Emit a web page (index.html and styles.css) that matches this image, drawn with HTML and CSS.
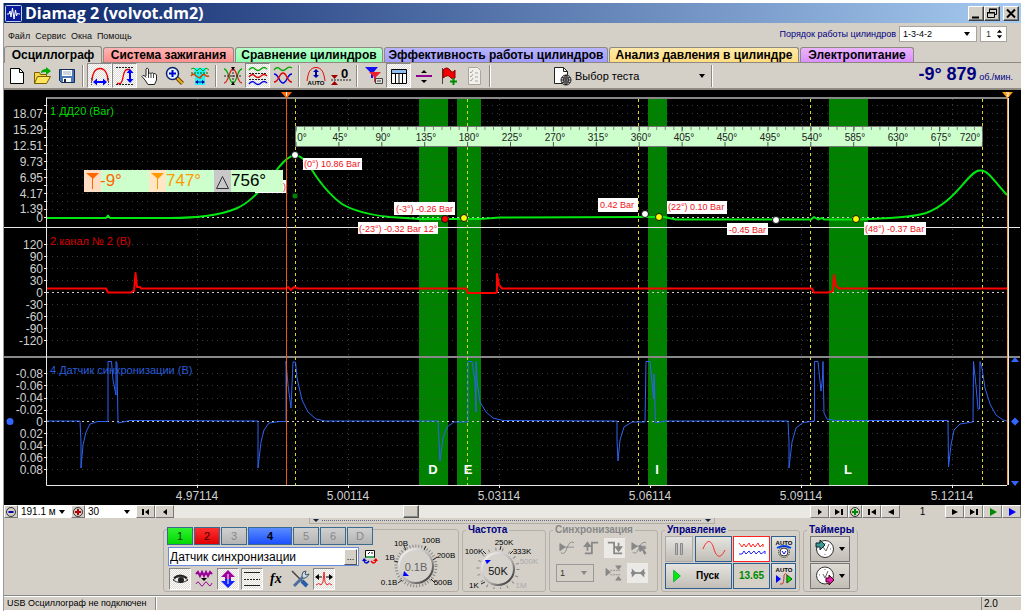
FILE: index.html
```html
<!DOCTYPE html>
<html lang="ru">
<head>
<meta charset="utf-8">
<title>Diamag 2 (volvot.dm2)</title>
<link rel="stylesheet" href="styles.css">
</head>
<body>
<div class="window">
<header class="titlebar">
  <svg class="app-logo" viewBox="0 0 17 17"><rect x=".5" y=".5" width="16" height="16" rx="1" fill="#0a1a9c" stroke="#c4d0f4"/><path d="M2 9h2l1-3 1 6 1.500-9 1.500 11L10.500 5l1 6 1-3 1 1H15" fill="none" stroke="#fff"/></svg>
  <h1>Diamag 2 (volvot.dm2)</h1>
  <div class="win-buttons">
    <button aria-label="Свернуть"><svg viewBox="0 0 16 15"><path d="M4 11.500h7" stroke="#000" stroke-width="2"/></svg></button>
    <button aria-label="Восстановить"><svg viewBox="0 0 16 15" fill="none" stroke="#000"><path d="M5.500 6V3.500h7v5H11M5 3h8M3.500 6.500h7v5h-7zM3 7h8"/></svg></button>
    <button class="close" aria-label="Закрыть"><svg viewBox="0 0 16 15"><path d="M4 3.500l8 8M12 3.500l-8 8" stroke="#000" stroke-width="2"/></svg></button>
  </div>
</header>

<div class="menubar">
  <nav class="menu"><a href="#">Файл</a><a href="#">Сервис</a><a href="#">Окна</a><a href="#">Помощь</a></nav>
  <div class="order">
    <label for="order">Порядок работы цилиндров</label>
    <span class="combo combo-order"><select id="order"><option>1-3-4-2</option></select></span>
    <span class="spin"><input aria-label="Номер цилиндра" value="1"><svg viewBox="0 0 8 12"><path d="M1 4.500L4 1l3 3.500zM1 7.500L4 11l3-3.500z"/></svg></span>
  </div>
</div>

<nav class="tabs">
  <button class="tab tab-scope">Осциллограф</button>
  <button class="tab tab-ignition">Система зажигания</button>
  <button class="tab tab-compare">Сравнение цилиндров</button>
  <button class="tab tab-efficiency">Эффективность работы цилиндров</button>
  <button class="tab tab-pressure">Анализ давления в цилиндре</button>
  <button class="tab tab-power">Электропитание</button>
</nav>

<div class="toolbar">
  <button class="tool" aria-label="Новый"><svg viewBox="0 0 20 20"><path d="M3.500 2.500h9l4 4v11h-13z" fill="#fff" stroke="#000"/><path d="M12.500 2.500v4h4" fill="none" stroke="#000"/></svg></button>
  <button class="tool" aria-label="Открыть"><svg viewBox="0 0 20 20"><path d="M2.500 17.500v-11h5l1 2h6v3" fill="#f5d84a" stroke="#7a5f00"/><path d="M2.500 17.500l3-7h13l-4 7z" fill="#ffe45e" stroke="#7a5f00"/><path d="M9 6q1-3 5-3V1l5 4-5 4V6q-3 0-5 1z" fill="#0a0"/></svg></button>
  <button class="tool" aria-label="Сохранить"><svg viewBox="0 0 20 20"><path d="M2.500 3.500h15v13h-13l-2-2z" fill="#4c78b8" stroke="#112a55"/><path d="M5 4h10v6H5zM6 12h8v4H6z" fill="#fff"/><path d="M7 13h2v3H7z" fill="#123"/><path d="M6 6h8M6 8h8" stroke="#9ab"/></svg></button>
  <i class="sep"></i>
  <button class="tool pressed" aria-label="Масштаб по горизонтали"><svg viewBox="0 0 20 20" fill="none"><path d="M2 15C2 8 5 2.500 10 2.500S18 8 18 15" stroke="#e00" stroke-width="1.300"/><path d="M1.500 12v7M18.500 12v7" stroke="#555" stroke-dasharray="2 1"/><path d="M3 16l4-3.500V15h6v-2.500l4 3.500-4 3.500V17H7v2.500z" fill="#00f"/></svg></button>
  <button class="tool pressed" aria-label="Масштаб по вертикали"><svg viewBox="0 0 20 20" fill="none"><path d="M2 17.500h3C9 17 7 4 12 3.500h3" stroke="#e00" stroke-width="1.300"/><path d="M1 1.500h18M1 18.500h18" stroke="#222" stroke-dasharray="2 1"/><path d="M15 3l3.500 4H16v6h2.500L15 17l-3.500-4H14V7h-2.500z" fill="#00f"/></svg></button>
  <button class="tool" aria-label="Рука"><svg viewBox="0 0 20 20"><path d="M6 10V3q1-2 2.500 0v5q1-2 2.500-.500 1-1.500 2.500 0Q15.500 7 16.500 9v5l-2 4.500H8L5 14l-3-3.500q.500-2 3-.5l1 1.500" fill="#fff" stroke="#222"/><path d="M8.500 8v4M11 8v4M13.500 8v4" stroke="#444"/></svg></button>
  <button class="tool" aria-label="Лупа"><svg viewBox="0 0 20 20"><path d="M11.500 11.500l6 6" stroke="#6a4a00" stroke-width="4"/><path d="M11.500 11.500l6 6" stroke="#f0b020" stroke-width="2"/><circle cx="7.500" cy="7.500" r="6" fill="#dff4ff" stroke="#10206a" stroke-width="1.500"/><path d="M7.500 4v7M4 7.500h7" stroke="#00c" stroke-width="2"/></svg></button>
  <button class="tool" aria-label="Фрагмент"><svg viewBox="0 0 20 20" fill="none"><path d="M4 2h12l-1 9v8H5v-8z" fill="#20f0f8"/><path d="M1 3l3-1 3 3 3-3 3 3 3-3 3 2" stroke="#0a0"/><path d="M1 10q2-3 4-1t5 3q3-5 5-3t4 1" stroke="#c40" stroke-width="1.500"/><path d="M1 7h18" stroke="#060" stroke-dasharray="2 1"/><path d="M5 16l3-2v1.500h4V14l3 2-3 2v-1.500H8V18z" fill="#00a"/></svg></button>
  <i class="sep"></i>
  <button class="tool" aria-label="Пересечение"><svg viewBox="0 0 20 20" fill="none"><path d="M1 3c5 0 5 14 9 14s4-14 9-14" stroke="#0a0" stroke-width="1.300"/><path d="M1 17c5 0 5-14 9-14s4 14 9 14" stroke="#d22" stroke-width="1.300"/><path d="M1 10h18M10 3v15" stroke="#222" stroke-dasharray="2 1"/><path d="M8 1h4l-2 3zM8 19h4l-2-3z" fill="#000"/></svg></button>
  <button class="tool pressed" aria-label="Раздельно"><svg viewBox="0 0 20 20" fill="none"><path d="M1 4q3-4 6-1t6 0 6 0" stroke="#0a0" stroke-width="1.300"/><path d="M1 11q3-4 6-1t6 0 6 0" stroke="#d00" stroke-width="1.300"/><path d="M1 18q3-4 6-1t6 0 6 0" stroke="#00d" stroke-width="1.300"/><path d="M1 7.500h18M1 13.500h18" stroke="#222" stroke-dasharray="2 1"/></svg></button>
  <button class="tool" aria-label="Совместно"><svg viewBox="0 0 20 20" fill="none"><path d="M1 4q3-4 6-1t6 0 6-1" stroke="#0a0" stroke-width="1.300"/><path d="M1 8c5 0 5 9 9 9s4-9 9-9" stroke="#00d" stroke-width="1.300"/><path d="M1 16c5 0 5-9 9-9s4 9 9 9" stroke="#d00" stroke-width="1.300"/></svg></button>
  <i class="sep"></i>
  <button class="tool" aria-label="Автомасштаб"><svg viewBox="0 0 20 20" fill="none"><path d="M1 15C2 7 4 1.500 10 1.500S18 7 19 15" stroke="#e00"/><path d="M10 3l3 3h-2v3h2l-3 3-3-3h2V6H7z" fill="#00a"/><text x="10" y="19" class="auto-text">AUTO</text></svg></button>
  <button class="tool" aria-label="Обнулить"><svg viewBox="0 0 20 20"><path d="M0 9h7L3.500 13zM0 19h7l-3.500-4z" fill="#a00000"/><path d="M0 14h20" stroke="#222" stroke-dasharray="2 1"/><text x="10" y="12" class="zero-text">0</text></svg></button>
  <i class="sep"></i>
  <button class="tool" aria-label="Фильтр"><svg viewBox="0 0 20 20"><path d="M1 1h13L9 7v5H7V7z" fill="#1010f0"/><path d="M5 6h12l-5 5v5h-2v-5z" fill="#e82030"/><path d="M11.500 12.500h7v5h-7z" fill="#ddd" stroke="#444"/><path d="M13 15h4" stroke="#444"/></svg></button>
  <button class="tool pressed" aria-label="Таблица"><svg viewBox="0 0 20 20"><path d="M2.500 3.500h15v14h-15z" fill="#fff" stroke="#000"/><path d="M3 4h14v3H3z" fill="#8bbcf0"/><path d="M3 7.500h14M6.500 8v9M10 8v9M13.500 8v9" stroke="#000"/></svg></button>
  <button class="tool" aria-label="Разделить"><svg viewBox="0 0 20 20"><path d="M2 10h16" stroke="#900090" stroke-width="2"/><path d="M7 7l3-3 3 3zM7 14l3 3 3-3z"/></svg></button>
  <button class="tool" aria-label="Добавить флаг"><svg viewBox="0 0 20 20"><path d="M3.500 2v16" stroke="#444"/><path d="M4 4q4-4 7 0t5 0v8q-3 2-5-1t-7 1z" fill="#f00000" stroke="#800"/><path d="M14.500 12v7M11 15.500h7" stroke="#008a00" stroke-width="2"/></svg></button>
  <button class="tool" aria-label="Список"><svg viewBox="0 0 20 20"><path d="M4.500 1.500h9l3 3v14h-12z" fill="#f2f0ea" stroke="#aaa69e"/><path d="M6 6l1 1 2-3M6 10l1 1 2-3M6 14l1 1 2-3M11 7h3M11 11h3M11 15h3" fill="none" stroke="#aaa69e"/></svg></button>
  <i class="sep"></i>
  <button class="test-select"><svg viewBox="0 0 20 20"><path d="M2.500 1.500h9l4 4v12h-13z" fill="#fff" stroke="#222"/><path d="M11.500 1.500v4h4" fill="none" stroke="#222"/><circle cx="14" cy="14" r="5" fill="#ddd" stroke="#222"/><path d="M9 14h10M14 9v10M10 11.500q4 1.500 8 0M10 16.500q4-1.500 8 0M14 9q-5 5 0 10 5-5 0-10" stroke="#222" fill="none"/></svg><span>Выбор теста</span><svg class="drop" viewBox="0 0 6 4"><path d="M0 0h6L3 4z"/></svg></button>
  <i class="sep"></i>
  <output class="rpm"><b>-9° 879</b> об./мин.</output>
</div>

<main class="scope">
<svg class="chart" viewBox="4 90 1017 415">
  <g class="bands"><path d="M419 99h29v386h-29zM457 99h24v386h-24zM648 99h19v386h-19zM829 99h39v386h-39z"/></g>
  <g class="grid">
    <path d="M47 105.500H1007M47 113.500H1007M47 121.500H1007M47 129.500H1007M47 137.500H1007M47 145.500H1007M47 153.500H1007M47 161.500H1007M47 169.500H1007M47 177.500H1007M47 185.500H1007M47 193.500H1007M47 201.500H1007M47 209.500H1007"/>
    <path d="M47 244.500H1007M47 256.500H1007M47 268.500H1007M47 280.500H1007M47 304.500H1007M47 316.500H1007M47 328.500H1007M47 340.500H1007"/>
    <path d="M47 373.500H1007M47 385.500H1007M47 398.500H1007M47 410.500H1007M47 433.500H1007M47 445.500H1007M47 457.500H1007M47 469.500H1007"/>
    <path d="M197.500 99V485M348.500 99V485M499.500 99V485M650.500 99V485M801.500 99V485M952.500 99V485"/>
  </g>
  <path class="zero" d="M47 217.500H1007M47 292.500H1007M47 421.500H1007"/>
  <g class="axis">
    <path class="frame-soft" d="M46 98H1008M4 357H1020"/>
    <path d="M46.500 98V485.500H1007M4 227.500H1020M1008.500 98V485"/>
    <path d="M44 105.500h3M44 113.500h3M44 121.500h3M44 129.500h3M44 137.500h3M44 145.500h3M44 153.500h3M44 161.500h3M44 169.500h3M44 177.500h3M44 185.500h3M44 193.500h3M44 201.500h3M44 209.500h3M44 217.500h3M44 244.500h3M44 256.500h3M44 268.500h3M44 280.500h3M44 292.500h3M44 304.500h3M44 316.500h3M44 328.500h3M44 340.500h3M44 373.500h3M44 385.500h3M44 398.500h3M44 410.500h3M44 421.500h3M44 433.500h3M44 445.500h3M44 457.500h3M44 469.500h3"/>
    <path d="M197.500 486v2M348.500 486v2M499.500 486v2M650.500 486v2M801.500 486v2M952.500 486v2"/>
  </g>
  <g class="ylab">
    <text x="43" y="118">18.07</text><text x="43" y="134">15.29</text><text x="43" y="150">12.51</text><text x="43" y="166">9.73</text><text x="43" y="182">6.95</text><text x="43" y="198">4.17</text><text x="43" y="213">1.39</text><text x="43" y="222">0</text>
    <text x="43" y="249">120</text><text x="43" y="261">90</text><text x="43" y="273">60</text><text x="43" y="285">30</text><text x="43" y="297">0</text><text x="43" y="309">-30</text><text x="43" y="321">-60</text><text x="43" y="333">-90</text><text x="43" y="345">-120</text>
    <text x="43" y="378">-0.08</text><text x="43" y="390">-0.06</text><text x="43" y="402">-0.04</text><text x="43" y="414">-0.02</text><text x="43" y="426">0</text><text x="43" y="438">0.02</text><text x="43" y="450">0.04</text><text x="43" y="462">0.06</text><text x="43" y="474">0.08</text>
  </g>
  <g class="xlab">
    <text x="197" y="500">4.97114</text><text x="348" y="500">5.00114</text><text x="499" y="500">5.03114</text><text x="650" y="500">5.06114</text><text x="801" y="500">5.09114</text><text x="952" y="500">5.12114</text>
  </g>
  <g class="chan">
    <text x="50" y="115" fill="#00d800">1 ДД20 (Bar)</text>
    <text x="50" y="245" fill="#d80000">2 канал № 2 (В)</text>
    <text x="50" y="374" fill="#2a5cd8">4 Датчик синхронизации (В)</text>
  </g>
  <path class="cyl" d="M295.500 99V485M467.500 99V485M638.500 99V485M810.500 99V485M982.500 99V485"/>
  <path class="trace green" d="M47 218H106L108 215.500 110 218H170C195 218 220 215 235 209 248 204 258 193 268 181 278 169 285 157 295 155 306 157 310 168 318 179 326 190 335 199 342 204 352 210 370 215 390 217L420 219H480L500 217.500 640 217H664L676 219.500H811L814 217 818 219.500 822 218 824 219.500H860L890 218C905 217 920 215 926 213 945 206 956 192 965 182 972 174 976 170 980 170.500 988 169 996 184 1007 195"/>
  <path class="trace red" d="M47 288.500H106L108 292.500H131L133 291 134 291 135.500 273 137 287 140 287 141 288.500H286L288 287 291 290 294 287 298 288.500H466L468 293H495L497 292 497 274 499 285 502 288.500H812L814 292.500H828L833 291 834 275 836 286 839 288.500H1007"/>
  <path class="trace blue" d="M47 421H80L81 442V468L83 445 86 432 90 424 98 421.500H108V361.500H111.500L113 380 116 395V361.500L117 363 118 423 130 420.500H150L258 421 258 442V468L261 442 264 430 269 423 280 421.500H286V361L288 385 291 408 293 362H295.500L297 378 302 400 308 412 316 419 325 421H438L439 442 440 461 443 438 447 427 454 422H468V361.500H472L475 381 476 412 476 361.500 477 381 480 402 486 412 493 418 503 420.500 617 421V440L618 461 620 440 624 427 632 422H645L646 361.500H650L653 393 654 399V374L655.500 423 665 421H788L789 442V468L792 442 796 428 803 422.500 814.500 421V361.500H818L821 391 822.500 378 823 361.500 824 413 827 419 835 420.500H948L948.500 467 951 445 954 430 960 424 973 422 973.500 361.500 976 386 978 409H979.500L980 361.500 982 368 985 388 990 404 996 415 1003 420 1007 421"/>
  <g class="letters"><text x="433" y="474">D</text><text x="468" y="474">E</text><text x="657" y="474">I</text><text x="848" y="474">L</text></g>

  <g class="ruler">
    <path d="M295.500 126.500h687v20h-687z"/>
    <path class="minor" d="M295.500 128.500H982.500" pathLength="800" stroke-width="3" stroke-dasharray="1.200 8.800"/>
    <path class="ticks" d="M295.500 129H982.500M295.500 144.500H982.500" stroke-width="5" stroke-dasharray="1 41.900"/>
    <text x="302" y="141">0°</text><text x="340" y="141">45°</text><text x="383" y="141">90°</text><text x="426" y="141">135°</text><text x="469" y="141">180°</text><text x="512" y="141">225°</text><text x="555" y="141">270°</text><text x="598" y="141">315°</text><text x="641" y="141">360°</text><text x="684" y="141">405°</text><text x="727" y="141">450°</text><text x="770" y="141">495°</text><text x="812" y="141">540°</text><text x="855" y="141">585°</text><text x="898" y="141">630°</text><text x="941" y="141">675°</text><text x="970" y="141">720°</text>
  </g>
  <g class="notes">
    <path d="M303 158h59v12h-59zM394 202h61v13h-61zM358 222h80v12h-80zM598 198h40v14h-40zM667 201h60v13h-60zM727 223h41v12h-41zM864 222h62v13h-62zM255 180h32v13h-32z"/>
    <text x="304" y="167">(0°) 10.86 Bar</text><text x="396" y="212">(-3°) -0.26 Bar</text><text x="359" y="232">(-23°) -0.32 Bar 12°</text><text x="600" y="208">0.42 Bar</text><text x="668" y="210">(22°) 0.10 Bar</text><text x="729" y="233">-0.45 Bar</text><text x="865" y="232">(48°) -0.37 Bar</text><text x="283" y="190">)</text>
  </g>
  <g class="dots">
    <circle cx="295" cy="155" r="3.500" fill="#fff"/><circle cx="295" cy="196" r="3" fill="#008000"/><circle cx="445" cy="219" r="3.500" fill="#f00"/><circle cx="464" cy="218" r="3.500" fill="#ff0"/><circle cx="645" cy="214" r="3.500" fill="#fff"/><circle cx="659" cy="217" r="3.500" fill="#ff0"/><circle cx="776" cy="220" r="3.500" fill="#fff"/><circle cx="856" cy="219" r="3.500" fill="#ff0"/>
  </g>
  <path d="M286.500 93V485" stroke="#e85a10"/>
  <path d="M281 92h11l-5.500 6.500z" fill="#ff6a10"/><path d="M286.500 92v4" stroke="#fff"/>
  <path d="M1007.500 93V485" stroke="#f0a040"/>
  <path d="M1002 92h11l-5.500 6.500z" fill="#ff9a10"/><path d="M1006 93h3l-2 3h2" fill="none" stroke="#fff"/>
  <g class="cursors">
    <path d="M84 170h199v22H84z" fill="#cfc" stroke="none"/>
    <path d="M84 170h17v22H84z" fill="#ffdcc4"/><path d="M149 170h17v22h-17z" fill="#ffe6c4"/><path d="M214 170h17v22h-17z" fill="#c8c8c8"/>
    <path d="M86 173h13l-6 6z" fill="#f60"/><path d="M92.500 178v11" stroke="#f60"/>
    <path d="M151 173h13l-6 6z" fill="#f90"/><path d="M157.500 178v11" stroke="#f90"/>
    <path d="M216.500 188.500h12l-6-12z" fill="none" stroke="#333"/>
    <text x="100" y="186" fill="#f60">-9°</text><text x="166" y="186" fill="#f90">747°</text><text x="231" y="186" fill="#000">756°</text>
  </g>
  <g fill="#36f"><circle cx="10" cy="421.500" r="3.500"/><path d="M1011 421.500l4-4 4 4-4 4zM1011 362l4-5 4 5zM1011 481l4 5 4-5z"/></g>
</svg>
</main>

<div class="navrow">
  <button class="nav round" aria-label="Уменьшить"><svg viewBox="0 0 12 12"><circle cx="6" cy="6" r="4.500" fill="none" stroke="#333"/><path d="M3.500 6h5" stroke="#00a" stroke-width="2"/></svg></button>
  <span class="combo combo-time"><select aria-label="Развёртка"><option>191.1 м</option></select></span>
  <button class="nav round" aria-label="Увеличить"><svg viewBox="0 0 12 12"><circle cx="6" cy="6" r="4.500" fill="none" stroke="#333"/><path d="M3 6h6M6 3v6" stroke="#b00" stroke-width="2"/></svg></button>
  <span class="combo combo-count"><select aria-label="Число кадров"><option>30</option></select></span>
  <button class="nav" aria-label="В начало"><svg viewBox="0 0 12 12"><path d="M2 3h2v6H2zM9 3v6L5 6z"/></svg></button>
  <button class="nav" aria-label="Назад"><svg viewBox="0 0 12 12"><path d="M8 3v6L4 6z"/></svg></button>
  <input class="scroll" type="range" min="0" max="100" value="37" aria-label="Прокрутка">
  <button class="nav" aria-label="Вперёд"><svg viewBox="0 0 12 12"><path d="M4 3v6l4-3z"/></svg></button>
  <button class="nav" aria-label="В конец"><svg viewBox="0 0 12 12"><path d="M8 3h2v6H8zM2 3v6l5-3z"/></svg></button>
  <button class="nav round" aria-label="Добавить"><svg viewBox="0 0 12 12"><circle cx="6" cy="6" r="4.500" fill="none" stroke="#333"/><path d="M3 6h6M6 3v6" stroke="#080" stroke-width="2"/></svg></button>
  <button class="nav" aria-label="Первый"><svg viewBox="0 0 12 12"><path d="M2 3h2v6H2zM10 3v6L5 6z"/></svg></button>
  <button class="nav" aria-label="Предыдущий"><svg viewBox="0 0 12 12"><path d="M9 3v6L3 6z"/></svg></button>
  <output class="page">1</output>
  <button class="nav" aria-label="Следующий"><svg viewBox="0 0 12 12"><path d="M3 3v6l6-3z"/></svg></button>
  <button class="nav" aria-label="Последний"><svg viewBox="0 0 12 12"><path d="M8 3h2v6H8zM2 3v6l5-3z"/></svg></button>
  <button class="nav" aria-label="Воспроизвести"><svg viewBox="0 0 12 12"><path d="M3 2v8l7-4z" fill="#080"/></svg></button>
  <button class="nav" aria-label="Воспроизвести всё"><svg viewBox="0 0 12 12"><path d="M3 2v8l7-4z" fill="#00f"/></svg></button>
</div>
<div class="splitter"><i></i></div>

<section class="dock">
  <div class="group channel">
    <div class="channel-main">
      <div class="chan-row">
        <button class="ch ch-1">1</button><button class="ch ch-2">2</button><button class="ch">3</button><button class="ch ch-4">4</button><button class="ch">5</button><button class="ch">6</button><button class="ch">D</button>
      </div>
      <div class="name-row">
        <div class="name"><input aria-label="Название канала" value="Датчик синхронизации"><button aria-label="Выбрать">...</button></div>
        <svg class="probe" viewBox="0 0 16 16"><path d="M3.500 1.500h9v7h-9z" fill="#fff" stroke="#111"/><path d="M4 7h8v2H4z" fill="#4a6"/><path d="M6 5l2-2M9 4h2" stroke="#222"/><path d="M7 12q-3 4-5 0" fill="none" stroke="#00c" stroke-width="1.500"/><path d="M0 12l2-3 3 3z" fill="#00c"/><path d="M9 12q3 4 5 0" fill="none" stroke="#e00" stroke-width="1.500"/><path d="M16 12l-2-3-3 3z" fill="#e00"/></svg>
      </div>
      <div class="flag-row">
        <button class="flag pressed" aria-label="Показать"><svg viewBox="0 0 20 18"><path d="M3 10q7-7 15 0-8 5-15 0z" fill="#eee" stroke="#333"/><path d="M4 8q6-5 13 0" fill="none" stroke="#222" stroke-width="2"/><circle cx="11" cy="10" r="3" fill="#222"/></svg></button>
        <button class="flag" aria-label="Сигнал"><svg viewBox="0 0 20 18" fill="none" stroke="#909"><path d="M2 4l2-2 2 4 2-4 2 4 2-4 2 4 2-4 2 2" stroke-width="2"/><path d="M2 14q2-4 4 0t4 0 4 0 4-1"/><path d="M7 8h6l-3 3z" fill="#000" stroke="none"/></svg></button>
        <button class="flag pressed" aria-label="Сдвиг"><svg viewBox="0 0 20 18"><path d="M10 0l7 7h-4v2H7V7H3z" fill="#a000a0"/><path d="M10 18l7-7h-4V9H7v2H3z" fill="#1020ff"/><path d="M10 4v10" stroke="#fff"/></svg></button>
        <button class="flag pressed" aria-label="Уровни"><svg viewBox="0 0 20 18" stroke="#222"><path d="M2 2.500h16M2 15.500h16"/><path d="M2 9.500h16" stroke-dasharray="2 1"/></svg></button>
        <button class="flag" aria-label="Функция"><svg viewBox="0 0 20 18"><text x="4" y="13" class="fx">fx</text></svg></button>
        <button class="flag" aria-label="Настройки"><svg viewBox="0 0 20 18"><path d="M2 1l11 11" stroke="#444" stroke-width="1.500"/><path d="M12 11l5 5" stroke="#2a5caa" stroke-width="4"/><path d="M14 6L4 16" stroke="#4d6f9e" stroke-width="3"/><path d="M16 1q-4 0-4 4t3 3 4-4l-3 1-1-1z" fill="#cde" stroke="#456"/></svg></button>
        <button class="flag pressed" aria-label="Импульс"><svg viewBox="0 0 20 18" fill="none"><path d="M2 15q3-3 5 0l2-3 1-10 1 10 2 3q2-3 5 0" stroke="#e22"/><path d="M1 7l4-3v6zM19 7l-4-3v6z" fill="#000"/><path d="M2 7h6M12 7h6" stroke="#000"/></svg></button>
      </div>
    </div>
    <svg class="knob" viewBox="378 530 80 62">
      <defs><linearGradient id="metal" x1="0" y1="0" x2="1" y2="1"><stop offset="0" stop-color="#fff"/><stop offset=".6" stop-color="#aaa"/><stop offset="1" stop-color="#111"/></linearGradient></defs>
      <circle cx="416" cy="567" r="20" class="knob-ticks" stroke-dasharray="1 2"/>
      <path d="M402 581l-4 3M398 563l-4-1M406 551l-2-4M424 551l2-4M433 561l4-3M431 580l4 4" class="knob-lines"/>
      <circle cx="416" cy="567" r="17" fill="#d5d2cb" stroke="url(#metal)" stroke-width="2"/>
      <path d="M403 577l1-5 5 5z" fill="#00f"/>
      <g class="kt"><text x="401" y="547">10В</text><text x="431" y="544">100В</text><text x="446" y="559">200В</text><text x="390" y="561">1В</text><text x="389" y="586">0.1В</text><text x="443" y="586">500В</text></g>
      <text x="416" y="572" class="kv">0.1В</text>
    </svg>
  </div>

  <fieldset class="group freq">
    <legend>Частота</legend>
    <svg class="knob" viewBox="464 535 80 54">
      <circle cx="499" cy="569" r="20" class="knob-ticks" stroke-dasharray="1 6"/>
      <path d="M486 582l-4 2M487 554l-3-3M501 550l1-4M511 554l3-3" class="knob-lines"/>
      <circle cx="499" cy="569" r="16" fill="#d5d2cb" stroke="url(#metal)" stroke-width="2"/>
      <path d="M486 560h6l-4 4z" fill="#00f"/>
      <g class="kt"><text x="505" y="545">250K</text><text x="475" y="554">100K</text><text x="523" y="554">333K</text><text x="475" y="588">1K</text><g fill="#aaa"><text x="530" y="564">500K</text><text x="522" y="588">1M</text></g></g>
      <text x="499" y="575" class="kv dark">50K</text>
    </svg>
  </fieldset>

  <fieldset class="group sync" disabled>
    <legend>Синхронизация</legend>
    <div class="sync-row">
      <button class="sy" aria-label="Уровень"><svg viewBox="0 0 20 18" fill="none" stroke="#888"><path d="M2 4l6 4-6 4z" fill="#888"/><path d="M3 14q4 4 7-5t8-6M4 8h14" /></svg></button>
      <button class="sy" aria-label="Фронт"><svg viewBox="0 0 20 18" fill="none" stroke="#888" stroke-width="2"><path d="M3 15h8V3h7"/><path d="M6 12V5M3 7l3-4 3 4z"/></svg></button>
      <button class="sy on" aria-label="Спад"><svg viewBox="0 0 20 18" fill="none" stroke="#888" stroke-width="2"><path d="M2 3h7v12h9"/><path d="M14 3v7M11 8l3 4 3-4z"/></svg></button>
      <button class="sy" aria-label="Указать"><svg viewBox="0 0 20 18" fill="none" stroke="#888"><path d="M2 3l6 4-6 4zM10 6l8 3-3 1 3 5-2 1-2-5-3 2z" fill="#888"/><path d="M3 14q4 3 7-5t8-6M4 7h14"/></svg></button>
    </div>
    <div class="sync-row">
      <span class="combo combo-sync"><select aria-label="Канал синхронизации"><option>1</option></select></span>
      <button class="sy" aria-label="Порог"><svg viewBox="0 0 20 18" fill="none" stroke="#888"><path d="M1 4l5 4-5 4zM12 1h6l-3 4zM12 17h6l-3-4z" fill="#888"/><path d="M6 6h12M6 11h12" stroke-dasharray="2 1"/></svg></button>
      <button class="sy on" aria-label="Ширина"><svg viewBox="0 0 20 18"><path d="M2 9h16" stroke="#888" stroke-width="2"/><path d="M3 4l5 5-5 5zM17 4l-5 5 5 5z" fill="#888"/></svg></button>
    </div>
  </fieldset>

  <fieldset class="group control">
    <legend>Управление</legend>
    <div class="control-grid">
      <div class="control-top">
        <button class="cb pause" aria-label="Пауза"><svg viewBox="0 0 16 16"><path d="M4.500 2.500h2v11h-2zM9.500 2.500h2v11h-2z" fill="#bbb" stroke="#888"/></svg></button>
        <button class="cb wide" aria-label="Синус"><svg viewBox="0 0 26 18"><path d="M2 9C6-1 10-1 13 9s7 9 11 1" fill="none" stroke="#f22"/></svg></button>
      </div>
      <button class="cb stream" aria-label="Поток"><svg viewBox="0 0 28 16" fill="none"><path d="M1 2l3 4 2-3 2 3 3-4 2 4 2-3 2 3 3-4 2 4 3-3v3" stroke="#f22"/><path d="M1 13h3l2-3 2 3 3-3 2 3 3-3 2 3 3-3 2 3 4-3v3" stroke="#22f"/></svg></button>
      <button class="cb" aria-label="Авто"><svg viewBox="0 0 18 20" fill="none"><text x="9" y="6" class="auto-mini">AUTO</text><path d="M2 9q7-4 14 0" stroke="#04f" stroke-width="2"/><circle cx="9" cy="13" r="5.500" stroke="#222" stroke-dasharray="1 1"/><circle cx="9" cy="13" r="4" fill="#fff" stroke="#333"/><path d="M7 12l2 3 2-3" stroke="#00f"/></svg></button>
      <button class="cb start"><svg viewBox="0 0 12 14"><path d="M2 0v14l8-7z" fill="#0e0" stroke="#0a4"/></svg><span>Пуск</span></button>
      <output class="cb volt">13.65</output>
      <button class="cb" aria-label="Автозапуск"><svg viewBox="0 0 18 20" fill="none"><text x="9" y="6" class="auto-mini">AUTO</text><path d="M5 18h2q2 0 2-9 2-3 3 0v8" stroke="#c33"/><path d="M1 9l5 4-5 4z" fill="#00f"/><path d="M12 9l5 4-5 4z" fill="#0d0" stroke="#060"/></svg></button>
    </div>
  </fieldset>

  <fieldset class="group timers">
    <legend>Таймеры</legend>
    <button class="timer" aria-label="Таймер старта"><svg viewBox="0 0 20 20"><circle cx="10" cy="10" r="8.500" fill="#fff" stroke="#333"/><path d="M10 4v1M10 15v1M15 10h1M8 8l3 4 3-7" stroke="#666" fill="none"/><path d="M1 4h4V1l5 5-5 5V8H1z" fill="#3a9a90" stroke="#123"/></svg><svg class="drop" viewBox="0 0 6 4"><path d="M0 0h6L3 4z"/></svg></button>
    <button class="timer" aria-label="Таймер остановки"><svg viewBox="0 0 20 20"><circle cx="10" cy="9.500" r="8.500" fill="#fff" stroke="#333"/><path d="M10 3v1M4 9h1M8 8l2 4 3-7" stroke="#666" fill="none"/><path d="M11 12h3V9l5 5-5 5v-3h-3z" fill="#e020b0" stroke="#401"/></svg><svg class="drop" viewBox="0 0 6 4"><path d="M0 0h6L3 4z"/></svg></button>
  </fieldset>
</section>

<footer class="status"><span class="usb">USB Осциллограф не подключен</span><span class="blank"></span><span class="version">2.0</span></footer>
</div>
</body>
</html>
```
FILE: styles.css
```css
* { box-sizing: border-box; }
body { margin: 3px 3px 0 3px; background: #fff; font: 9px/12px "Liberation Sans", Arial, sans-serif; color: #000; }
button, input, select { font: inherit; color: inherit; margin: 0; padding: 0; border-radius: 0; }
button { background: none; border: 0; display: flex; align-items: center; justify-content: center; }
svg { display: block; flex: none; }
.window { background: #d4d0c8; border-left: 1px solid #999; }

.titlebar { display: flex; align-items: center; height: 20px; background: linear-gradient(90deg, #0a246a, #a6caf0); color: #fff; padding: 0 2px 0 1px; }
.app-logo { width: 17px; height: 17px; }
.titlebar h1 { margin: 0 auto 0 3px; font: bold 16px/20px "Open Sans", sans-serif; }
.win-buttons { display: flex; }
.win-buttons button { width: 16px; height: 15px; background: #d4d0c8; border: 1px solid; border-color: #fff #404040 #404040 #fff; box-shadow: inset -1px -1px #808080; }
.win-buttons svg { width: 16px; height: 15px; }
.win-buttons .close { margin-left: 3px; }

.menubar { display: flex; justify-content: space-between; align-items: center; height: 23px; }
.menu { display: flex; gap: 5px; padding: 2px 0 0 4px; }
.menu a { color: #111; text-decoration: none; }
.order { display: flex; align-items: center; padding: 0 14px 2px 0; color: #000080; }
.order label { margin-right: 3px; }
.combo { position: relative; display: block; background: #fff; color: #000; }
.combo::after { content: ""; position: absolute; right: 6px; top: 50%; margin-top: -2px; border: 3px solid transparent; border-top: 4px solid #000; border-bottom: 0; }
.combo select { appearance: none; display: block; width: 100%; height: 100%; border: 0; background: none; padding: 0 3px; outline: 0; }
.combo-order { width: 78px; height: 16px; border: 1px solid #a8a49c; margin-right: 3px; }
.spin { display: flex; align-items: center; width: 27px; height: 16px; background: #fff; border: 1px solid #a8a49c; color: #333; padding-right: 3px; }
.spin input { flex: 1; min-width: 0; border: 0; background: none; padding-left: 5px; }
.spin svg { width: 7px; height: 12px; }

.tabs { display: flex; gap: 1px; height: 17px; align-items: flex-end; border-bottom: 1px solid #8e8a82; }
.tab { height: 15px; flex: none; font-size: 12px; line-height: 14px; font-weight: bold; white-space: nowrap; border: 1px solid #8e8a82; border-bottom: 0; border-radius: 3px 3px 0 0; }
.tab-scope { width: 98px; height: 17px; background: #d4d0c8; margin-bottom: -1px; }
.tab-ignition { width: 131px; background: linear-gradient(#ffb4b4, #ff8f8f); }
.tab-compare { width: 148px; background: linear-gradient(#b4ffc8, #8fffb0); }
.tab-efficiency { width: 224px; background: linear-gradient(#b8b4ff, #a09cff); }
.tab-pressure { width: 190px; background: linear-gradient(#ffe9a8, #ffdc80); }
.tab-power { width: 114px; background: linear-gradient(#eab4ff, #dc90ff); }

.toolbar { display: flex; align-items: center; height: 27px; border-bottom: 2px solid #8e8a82; }
.tool { width: 25px; height: 25px; }
.tool svg { width: 20px; height: 20px; }
.pressed { background: repeating-conic-gradient(#fff 0 25%, #dedbd5 0 50%) 0 0 / 2px 2px; border: 1px solid; border-color: #888 #fff #fff #888; }
.sep { width: 2px; height: 22px; margin: 0 3px; border-left: 1px solid #8e8a82; border-right: 1px solid #fff; flex: none; }
.auto-text { font: bold 6px "Liberation Sans", sans-serif; text-anchor: middle; fill: #000; }
.zero-text { font: bold 13px "Liberation Sans", sans-serif; }
.test-select { flex: none; width: 214px; height: 24px; padding: 0 3px 0 58px; gap: 3px; justify-content: flex-start; font-size: 11px; }
.test-select svg { width: 20px; height: 20px; }
.test-select .drop { width: 6px; height: 4px; margin-left: auto; }
.rpm { margin-left: auto; padding-right: 8px; font-size: 9px; line-height: 20px; color: #000080; white-space: nowrap; }
.rpm b { font-size: 18px; }

.scope { background: #000; }
.chart { width: 100%; height: auto; font-family: "Liberation Sans", Arial, sans-serif; }
.bands { fill: #008200; }
.grid { fill: none; stroke: #555; stroke-dasharray: 1 4; opacity: .7; }
.zero { fill: none; stroke: #ccc; stroke-dasharray: 2 3; }
.axis { fill: none; stroke: #e8e8e8; }
.axis .frame-soft { stroke: #888; stroke-width: 2; }
.ylab { font-size: 12px; fill: #d0d0d0; text-anchor: end; }
.xlab { font-size: 12px; fill: #d0d0d0; text-anchor: middle; }
.chan { font-size: 11px; }
.cyl { fill: none; stroke: #d8d820; stroke-dasharray: 3 3; }
.trace { fill: none; stroke-linejoin: round; }
.green { stroke: #00e810; stroke-width: 2; }
.red { stroke: #f00; stroke-width: 2; }
.blue { stroke: #2f62f0; }
.letters { font: bold 13px "Liberation Sans", sans-serif; fill: #fff; text-anchor: middle; }
.ruler { fill: #cfc; stroke: #777; }
.ruler .ticks { stroke: #555; }
.ruler .minor { stroke: #888; }
.ruler text { font-size: 10px; fill: #222; stroke: none; text-anchor: middle; }
.notes path { fill: #fff; }
.notes text { font-size: 9px; fill: #f01020; }
.dots { stroke: #111; }
.cursors text { font-size: 17px; }

.navrow { display: flex; height: 13px; }
.nav { flex: none; width: 19px; background: #d4d0c8; border: 1px solid; border-color: #fff #777 #777 #fff; }
.nav svg { width: 12px; height: 12px; }
.round { width: 14px; }
.combo-time { width: 53px; }
.combo-count { width: 51px; }
.navrow .combo select { font-size: 10px; line-height: 12px; }
.scroll { appearance: none; flex: 1; min-width: 0; background: #eae8e3; height: 13px; }
.scroll::-webkit-slider-thumb { appearance: none; width: 16px; height: 13px; background: #d4d0c8; border: 1px solid; border-color: #fff #555 #555 #fff; box-shadow: inset -1px -1px #888; }
.page { flex: none; width: 45px; text-align: center; line-height: 13px; font-size: 10px; }
.splitter { height: 6px; padding-left: 305px; }
.splitter i { display: flex; align-items: center; justify-content: space-between; width: 406px; height: 6px; border: 1px solid #b0aca4; border-top: 0; padding: 0 3px; background: repeating-linear-gradient(90deg, #668 0 1px, transparent 1px 2px) 12px 2px / 380px 1px no-repeat; }
.splitter i::before, .splitter i::after { content: ""; border: 3px solid transparent; border-top: 3px solid #124; border-bottom: 0; }

.dock { display: flex; align-items: flex-end; gap: 3px; height: 72px; padding: 0 0 3px 159px; border-bottom: 1px solid #888; }
.group { border: 1px solid #b4b0a8; border-radius: 3px; margin: 0; padding: 0; min-width: 0; flex: none; height: 67px; }
.group legend { margin-left: 3px; padding: 0 2px; font-size: 10px; line-height: 10px; font-weight: bold; color: #000080; }
.channel { display: flex; align-items: flex-end; width: 296px; height: 63px; padding-left: 3px; }
.channel-main { width: 211px; display: flex; flex-direction: column; gap: 2px; padding-bottom: 1px; }
.chan-row { display: flex; gap: 1px; }
.ch { width: 26px; height: 18px; border: 1px solid #3a6a90; background: linear-gradient(#d0d0d0, #b4b4b4); color: #888; font-size: 11px; }
.ch-1 { background: linear-gradient(#30f030, #00d800); color: #030; }
.ch-2 { background: linear-gradient(#ff3030, #e00000); color: #300; }
.ch-4 { width: 44px; background: linear-gradient(#5a8cff, #1c50ff); color: #000; font-weight: bold; }
.name-row { display: flex; align-items: center; gap: 3px; padding-left: 1px; }
.name { display: flex; align-items: center; width: 192px; height: 19px; border: 1px solid #6a8ae0; background: #fff; padding-right: 1px; }
.name input { flex: 1; min-width: 0; border: 0; background: none; font-size: 12px; height: 17px; padding-left: 1px; }
.name button { width: 13px; height: 16px; background: #d4d0c8; border: 1px solid; border-color: #fff #555 #555 #fff; }
.probe { width: 16px; height: 16px; }
.flag-row { display: flex; justify-content: space-between; width: 168px; padding-left: 2px; }
.flag { width: 22px; height: 22px; }
.flag svg { width: 20px; height: 18px; }
.fx { font: italic bold 14px "Liberation Serif", serif; }
.knob { width: 80px; }
.channel .knob { height: 62px; }
.freq .knob { height: 54px; }
.knob-ticks { fill: none; stroke: #888; stroke-width: 3; }
.knob-lines { fill: none; stroke: #222; }
.kt { font-size: 8px; text-anchor: middle; }
.kv { font-size: 11px; text-anchor: middle; fill: #666; }
.dark { fill: #111; }
.freq { width: 84px; }
.sync { width: 109px; }
.sync legend { color: #888; }
.sync-row { display: flex; align-items: center; gap: 3px; height: 25px; padding: 0 6px; }
.sy { width: 21px; height: 20px; }
.sy svg { width: 18px; height: 16px; }
.on { background: #eceae6; }
.combo-sync { width: 38px; height: 18px; border: 1px solid #999; background: #d4d0c8; color: #444; margin-right: 6px; }
.combo-sync::after { border-top-color: #888; }
.combo-sync select { color: #333; opacity: 1; }
.control { width: 139px; }
.control-grid { display: grid; grid-template-columns: 67px 37px 25px; grid-auto-rows: 26px; gap: 1px; padding: 1px 3px; }
.control-top { display: grid; grid-template-columns: 28px 37px; gap: 2px; }
.cb { border: 1px solid #2f5f90; background: linear-gradient(#e6e4e0, #c2beb6); font-size: 10px; line-height: 24px; text-align: center; height: 26px; }
.cb svg { width: 18px; height: 20px; }
.pause { border-color: #aaa; }
.pause svg { width: 16px; height: 16px; }
.wide svg { width: 26px; height: 18px; }
.stream { background: #fff; border-color: #f22; }
.stream svg { width: 28px; height: 16px; }
.start { font-weight: bold; justify-content: flex-start; padding-left: 6px; gap: 14px; }
.start svg { width: 10px; height: 14px; }
.volt { color: #080; font-weight: bold; background: #d4d0c8; }
.auto-mini { font: bold 6px "Liberation Sans", sans-serif; text-anchor: middle; fill: #000; }
.timers { width: 55px; }
.timer { width: 40px; height: 26px; margin: 1px 0 0 6px; gap: 4px; border: 1px solid #777; background: linear-gradient(#dedbd5, #c2beb6); }
.timer svg { width: 20px; height: 20px; }
.timer .drop { width: 6px; height: 4px; }

.status { display: flex; height: 15px; line-height: 13px; border-top: 1px solid #fff; border-bottom: 1px solid #fff; }
.status span { border-right: 1px solid #888; }
.usb { width: 152px; padding-left: 3px; font-size: 9px; white-space: nowrap; }
.blank { flex: 1; border-left: 1px solid #fff; }
.status .version { width: 39px; padding-left: 2px; border-right: 0; font-size: 10px; }
```
